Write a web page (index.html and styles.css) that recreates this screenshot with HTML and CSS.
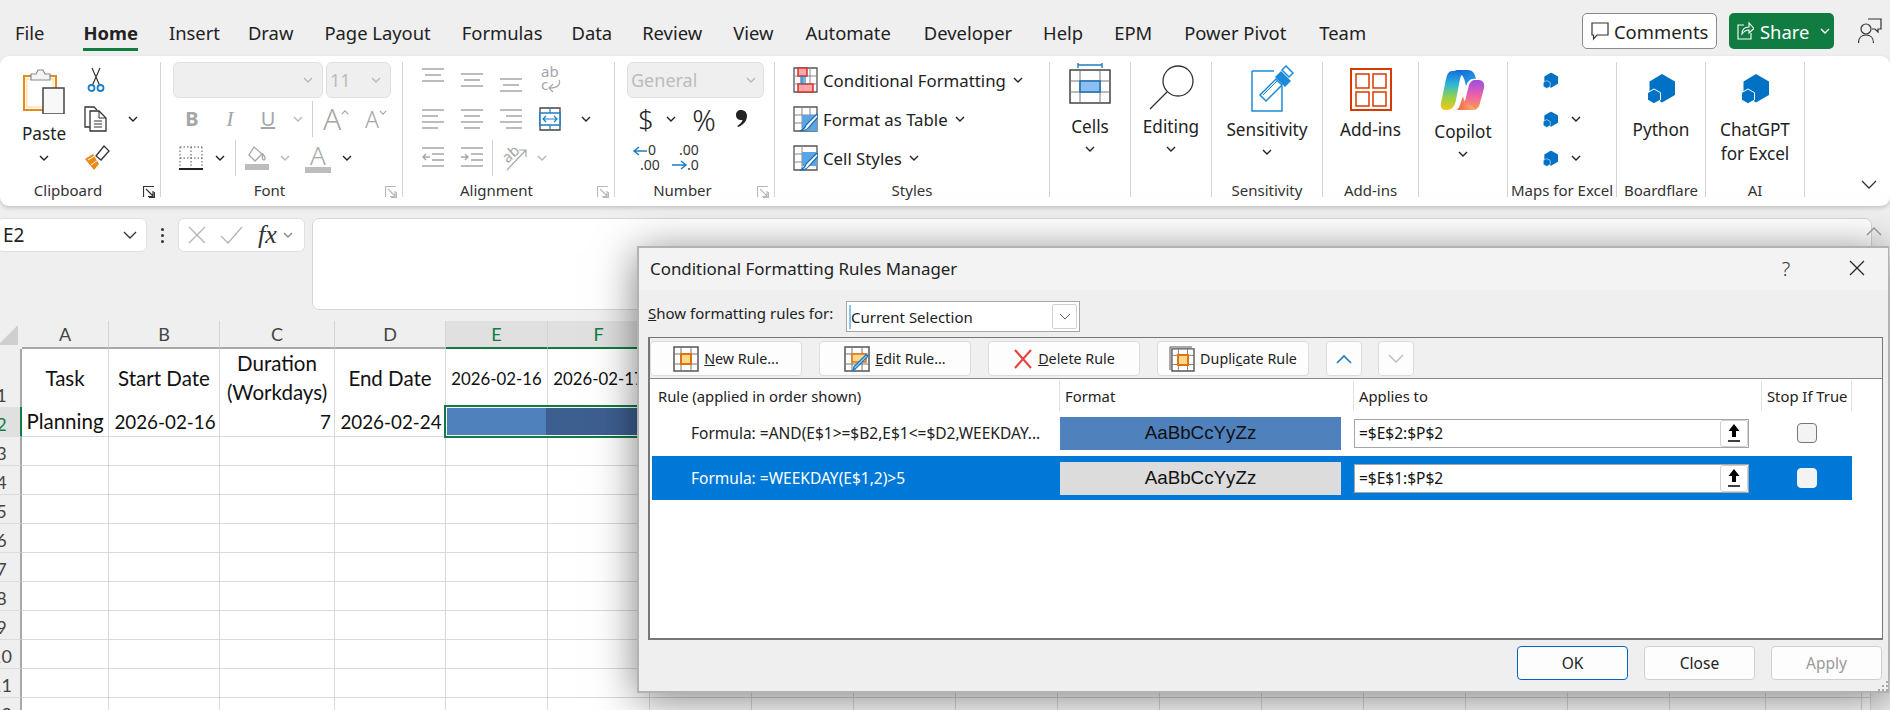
FILE: index.html
```html
<!DOCTYPE html>
<html lang="en">
<head>
<meta charset="utf-8">
<title>Conditional Formatting Rules Manager</title>
<link rel="stylesheet" href="styles.css">
</head>
<body>
<svg class="defs" aria-hidden="true">
  <defs>
    <symbol id="ch" viewBox="0 0 10 6"><path d="M1 1l4 4 4-4" fill="none" stroke="currentColor" stroke-width="1.400"/></symbol>
    <symbol id="hex" viewBox="0 0 28 30"><path d="M15 0l13 7.500V21l-13 7.500L2.500 21V7.500z" fill="#0072c6"/><path d="M7 15l6.500 3.700V26L7 29.700.5 26v-7.300z" fill="#0072c6" stroke="#fff" stroke-width="1"/></symbol>
    <symbol id="launch" viewBox="0 0 12 12"><path d="M.5 11V.5H11M3 3l7 7M10 5v5.500H5M11.500 6v5.500H6" fill="none" stroke="currentColor" stroke-width="1.200"/></symbol>
    <symbol id="up" viewBox="0 0 16 20"><path d="M8 1L2.500 8H6v6h4V8h3.500z" fill="#000"/><path d="M2 18h12" stroke="#000" stroke-width="1.500"/></symbol>
    <symbol id="cellfmt" viewBox="0 0 26 26"><path d="M1 1h24v24H1z" fill="#fff" stroke="#555" stroke-width="1.500"/><path d="M8 1v24M18 1v24M1 8h24M1 18h24" stroke="#777"/></symbol>
    <linearGradient id="cpL" x1="0" y1="0" x2="0" y2="1"><stop offset="0" stop-color="#1a6fe0"/><stop offset=".35" stop-color="#2bb8d8"/><stop offset=".65" stop-color="#8fd14f"/><stop offset="1" stop-color="#f5c518"/></linearGradient>
    <linearGradient id="cpR" x1="0" y1="0" x2="0" y2="1"><stop offset="0" stop-color="#9a4fe0"/><stop offset=".5" stop-color="#ec5fae"/><stop offset="1" stop-color="#fb9a4a"/></linearGradient>
    <linearGradient id="cpT" x1="0" y1="0" x2="1" y2="1"><stop offset="0" stop-color="#0f5fd8"/><stop offset="1" stop-color="#2aa8e8"/></linearGradient>
    <linearGradient id="cpB" x1="0" y1="0" x2="1" y2="0"><stop offset="0" stop-color="#f0553c"/><stop offset="1" stop-color="#ffb27a"/></linearGradient>
  </defs>
</svg>

<header class="tabbar">
  <nav class="tabs">
    <span class="tab t-file">File</span>
    <span class="tab active">Home</span>
    <span class="tab">Insert</span>
    <span class="tab t-draw">Draw</span>
    <span class="tab">Page Layout</span>
    <span class="tab">Formulas</span>
    <span class="tab t-data">Data</span>
    <span class="tab t-review">Review</span>
    <span class="tab">View</span>
    <span class="tab t-auto">Automate</span>
    <span class="tab t-dev">Developer</span>
    <span class="tab">Help</span>
    <span class="tab">EPM</span>
    <span class="tab t-pp">Power Pivot</span>
    <span class="tab t-team">Team</span>
  </nav>
  <div class="actions">
    <button class="btn-comments"><svg width="18" height="20" viewBox="0 0 18 20"><path d="M1 2h16v12H6l-3.500 4v-4H1z" fill="none" stroke="#333" stroke-width="1.200"/></svg>Comments</button>
    <button class="btn-share"><svg width="18" height="20" viewBox="0 0 18 20"><path d="M8 4H2v14h13v-6M6 13c0-5 3-7 7-7V2l5 5.500L13 12V9c-3 0-5 1-7 4z" fill="none" stroke="#fff" stroke-width="1.100"/></svg>Share<svg class="chev" viewBox="0 0 10 6"><use href="#ch"/></svg></button>
    <svg class="person" width="24" height="30" viewBox="0 0 24 30"><circle cx="8" cy="13" r="5" fill="none" stroke="#333" stroke-width="1.200"/><path d="M.5 27c0-5 3-8 7.500-8s7.500 3 7.500 8" fill="none" stroke="#333" stroke-width="1.200"/><path d="M10 3h13v10h-3v3l-3-3h-3" fill="none" stroke="#333" stroke-width="1.200"/></svg>
  </div>
</header>

<section class="ribbon">
  <div class="group g-clip">
    <div class="gbody clip-body">
      <div class="paste">
        <svg width="42" height="46" viewBox="0 0 42 46"><path d="M1 8h32v34H1z" fill="#fdf6e3" stroke="#e58a1f" stroke-width="2"/><path d="M4 11h26v28H4z" fill="#fff" stroke="#f5d9a0"/><path d="M8 6h5l2-4h5l2 4h5v6H8z" fill="#f4f4f4" stroke="#8a8a8a" stroke-width="1.200"/><path d="M20 20h21v26H20z" fill="#f8f8f8" stroke="#444" stroke-width="1.500"/></svg>
        <span class="biglabel">Paste</span>
        <svg class="chev dark" viewBox="0 0 10 6"><use href="#ch"/></svg>
      </div>
      <div class="rows clip-rows">
        <div class="row"><svg width="24" height="26" viewBox="0 0 24 26"><path d="M8 1l7.500 17M16 1L8.500 18" stroke="#333" stroke-width="1.200" fill="none"/><circle cx="7.500" cy="21" r="3" fill="none" stroke="#1c7fc4" stroke-width="1.800"/><circle cx="16.500" cy="21" r="3" fill="none" stroke="#1c7fc4" stroke-width="1.800"/></svg></div>
        <div class="row"><svg width="26" height="26" viewBox="0 0 26 26"><path d="M6 21H1V1h9l3 3" fill="none" stroke="#333" stroke-width="1.300"/><path d="M6 5h9l7 7v13H6z" fill="#fff" stroke="#333" stroke-width="1.300"/><path d="M15 5v7h7M10 15h8M10 18h8M10 21h8" fill="none" stroke="#333"/></svg><svg class="chev dark gap-copy" viewBox="0 0 10 6"><use href="#ch"/></svg></div>
        <div class="row"><svg width="26" height="26" viewBox="0 0 26 26"><path d="M1 14l8-5 6 10-5 6z" fill="#ec8a17"/><path d="M4 15l8-5M7 20l7-5" stroke="#fff"/><path d="M12 11L20 1l5 5-8 9z" fill="#fff" stroke="#333" stroke-width="1.300"/></svg></div>
      </div>
    </div>
    <div class="glabel has-launch">Clipboard<svg class="launch dark" viewBox="0 0 12 12"><use href="#launch"/></svg></div>
  </div>

  <div class="group g-font">
    <div class="gbody rows">
      <div class="row">
        <div class="combo c-name"><svg class="chev pale" viewBox="0 0 10 6"><use href="#ch"/></svg></div>
        <div class="combo c-size"><span>11</span><svg class="chev pale" viewBox="0 0 10 6"><use href="#ch"/></svg></div>
      </div>
      <div class="row fmt">
        <b class="gl w38">B</b><i class="gl w38 it">I</i><u class="gl w38">U</u><svg class="chev pale w-chev" viewBox="0 0 10 6"><use href="#ch"/></svg>
        <span class="vsep"></span>
        <span class="bigA">A<svg viewBox="0 0 10 6"><path d="M1 5l4-4 4 4" fill="none" stroke="#a6a6a6" stroke-width="1.400"/></svg></span>
        <span class="bigA smallA">A<svg viewBox="0 0 10 6"><path d="M1 1l4 4 4-4" fill="none" stroke="#a6a6a6" stroke-width="1.400"/></svg></span>
      </div>
      <div class="row fmt3">
        <svg width="24" height="24" viewBox="0 0 24 24"><path d="M1 1h22M1 1v21M23 1v21M12 1v21M1 12h22" fill="none" stroke="#555" stroke-dasharray="1.500 2"/><path d="M0 23h24" stroke="#222" stroke-width="2"/></svg>
        <svg class="chev dark c1" viewBox="0 0 10 6"><use href="#ch"/></svg>
        <span class="vsep s1"></span>
        <svg width="24" height="26" viewBox="0 0 24 26"><path d="M9 2l-5 8 6 6 7-7zM18 9c2 3 3 5 1 6-2 0-2-3-1-6z" fill="#fff" stroke="#a6a6a6" stroke-width="1.300"/><path d="M0 19h24v6H0z" fill="#bdbdbd"/></svg>
        <svg class="chev pale c2" viewBox="0 0 10 6"><use href="#ch"/></svg>
        <span class="acol">A</span>
        <svg class="chev dark c3" viewBox="0 0 10 6"><use href="#ch"/></svg>
      </div>
    </div>
    <div class="glabel has-launch">Font<svg class="launch" viewBox="0 0 12 12"><use href="#launch"/></svg></div>
  </div>

  <div class="group g-align">
    <div class="gbody rows">
      <div class="row al">
        <svg width="22" height="36" viewBox="0 0 22 36"><path d="M0 7h22M3 13h16M0 19h22" stroke="#a6a6a6" stroke-width="1.400"/></svg>
        <svg width="22" height="36" viewBox="0 0 22 36"><path d="M0 12h22M3 18h16M0 24h22" stroke="#a6a6a6" stroke-width="1.400"/></svg>
        <svg width="22" height="36" viewBox="0 0 22 36"><path d="M0 17h22M3 23h16M0 29h22" stroke="#a6a6a6" stroke-width="1.400"/></svg>
        <svg class="vis" width="22" height="36" viewBox="0 0 22 36"><text x="2" y="15" class="svgt">ab</text><text x="2" y="28" class="svgt">c</text><path d="M20 18c2 4-1 8-9 8m3-4l-4 4 4 4" fill="none" stroke="#a6a6a6" stroke-width="1.200"/></svg>
      </div>
      <div class="row al">
        <svg width="22" height="36" viewBox="0 0 22 36"><path d="M0 9h22M0 15h16M0 21h22M0 27h16" stroke="#a6a6a6" stroke-width="1.400"/></svg>
        <svg width="22" height="36" viewBox="0 0 22 36"><path d="M0 9h22M3 15h16M0 21h22M3 27h16" stroke="#a6a6a6" stroke-width="1.400"/></svg>
        <svg width="22" height="36" viewBox="0 0 22 36"><path d="M0 9h22M6 15h16M0 21h22M6 27h16" stroke="#a6a6a6" stroke-width="1.400"/></svg>
        <svg width="22" height="36" viewBox="0 0 22 36"><path d="M1 7h20v22H1z" fill="#fff" stroke="#444" stroke-width="1.300"/><path d="M1 12h20v12H1z" fill="#fff" stroke="#1c7fc4" stroke-width="1.600"/><path d="M4 18h14M7 15l-3 3 3 3M15 15l3 3-3 3M11 7v5M11 24v5" fill="none" stroke="#1c7fc4" stroke-width="1.200"/></svg>
        <svg class="chev dark c-merge" viewBox="0 0 10 6"><use href="#ch"/></svg>
      </div>
      <div class="row al al3">
        <svg width="22" height="36" viewBox="0 0 22 36"><path d="M0 8h22M10 14h12M10 20h12M0 26h22M8 17H1m3-3l-3 3 3 3" fill="none" stroke="#a6a6a6" stroke-width="1.400"/></svg>
        <svg width="22" height="36" viewBox="0 0 22 36"><path d="M0 8h22M10 14h12M10 20h12M0 26h22M0 17h7m-3-3l3 3-3 3" fill="none" stroke="#a6a6a6" stroke-width="1.400"/></svg>
        <span class="vsep"></span>
        <svg class="vis" width="26" height="36" viewBox="0 0 26 36"><text x="1" y="20" class="svgt" transform="rotate(-42 8 16)">ab</text><path d="M5 30L24 10m-7 0h7v7" fill="none" stroke="#a6a6a6" stroke-width="1.200"/></svg>
        <svg class="chev pale" viewBox="0 0 10 6"><use href="#ch"/></svg>
      </div>
    </div>
    <div class="glabel has-launch">Alignment<svg class="launch" viewBox="0 0 12 12"><use href="#launch"/></svg></div>
  </div>

  <div class="group g-num">
    <div class="gbody rows">
      <div class="row"><div class="combo c-gen"><span>General</span><svg class="chev pale" viewBox="0 0 10 6"><use href="#ch"/></svg></div></div>
      <div class="row numr">
        <span class="dollar">$</span>
        <svg class="chev dark" viewBox="0 0 10 6"><use href="#ch"/></svg>
        <span class="pct">%</span>
        <svg width="14" height="24" viewBox="0 0 14 24"><path d="M7 3c3 0 6 2 6 6 0 5-4 9-9 11l-.8-1c3-2 5-4 5.300-6C6 13.500 2 12.500 2 8c0-3 2-5 5-5z" fill="#222"/></svg>
      </div>
      <div class="row decr">
        <svg class="vis" width="26" height="32" viewBox="0 0 26 32"><text x="15" y="13" class="svgd">0</text><text x="7" y="28" class="svgd">.00</text><path d="M14 9H1m5-4L1 9l5 4" fill="none" stroke="#1c7fc4" stroke-width="1.500"/></svg>
        <svg class="vis" width="26" height="32" viewBox="0 0 26 32"><text x="7" y="13" class="svgd">.00</text><text x="15" y="28" class="svgd">.0</text><path d="M0 23h14m-5-4l5 4-5 4" fill="none" stroke="#1c7fc4" stroke-width="1.500"/></svg>
      </div>
    </div>
    <div class="glabel has-launch">Number<svg class="launch" viewBox="0 0 12 12"><use href="#launch"/></svg></div>
  </div>

  <div class="group g-styles">
    <div class="gbody rows">
      <div class="row st">
        <svg width="25" height="26" viewBox="0 0 25 26"><path d="M1 1h23v24H1z" fill="#fff" stroke="#555" stroke-width="1.300"/><path d="M9 1v24M17 1v24M1 9h23M1 17h23" stroke="#888"/><path d="M5 1h9v8H5zM5 17h15v8H5z" fill="#f7a8a8" stroke="#d83030" stroke-width="1.500"/><path d="M7 9h6v8H7z" fill="#1c7fc4" opacity=".6"/></svg>
        <span>Conditional Formatting</span><svg class="chev dark" viewBox="0 0 10 6"><use href="#ch"/></svg>
      </div>
      <div class="row st">
        <svg width="25" height="26" viewBox="0 0 25 26"><path d="M1 1h23v24H1z" fill="#fff" stroke="#555" stroke-width="1.300"/><path d="M9 1v24M17 1v24M1 9h23M1 17h23" stroke="#888"/><path d="M9 9h15v16H9z" fill="#5aa5e6"/><path d="M24 8L13 19c-1 4-4 5-6 6 3 0 7-1 9-4L25 11z" fill="#fff" stroke="#1c6fb0" stroke-width="1.200"/></svg>
        <span>Format as Table</span><svg class="chev dark" viewBox="0 0 10 6"><use href="#ch"/></svg>
      </div>
      <div class="row st">
        <svg width="25" height="26" viewBox="0 0 25 26"><path d="M1 1h23v24H1z" fill="#fff" stroke="#555" stroke-width="1.300"/><path d="M9 1v24M1 9h23M1 17h23" stroke="#888"/><path d="M9 7h15v14H9z" fill="#5aa5e6"/><path d="M24 8L13 19c-1 4-4 5-6 6 3 0 7-1 9-4L25 11z" fill="#fff" stroke="#1c6fb0" stroke-width="1.200"/></svg>
        <span>Cell Styles</span><svg class="chev dark" viewBox="0 0 10 6"><use href="#ch"/></svg>
      </div>
    </div>
    <div class="glabel">Styles</div>
  </div>

  <div class="group g-cells">
    <div class="gbody big">
      <svg width="42" height="53" viewBox="0 0 42 53"><path d="M9 1v5M33 1v5M9 3h24" stroke="#1c7fc4" stroke-width="1.400" fill="none"/><path d="M1 8h40v33H1z" fill="#fff" stroke="#444" stroke-width="1.500"/><path d="M1 19h40M1 30h40M11 8v33M31 8v33" stroke="#777"/><path d="M11 19h20v11H11z" fill="#8bbff0" stroke="#1c6fb0" stroke-width="1.500"/></svg>
      <span class="biglabel">Cells</span>
      <svg class="chev dark" viewBox="0 0 10 6"><use href="#ch"/></svg>
    </div>
    <div class="glabel"></div>
  </div>

  <div class="group g-edit">
    <div class="gbody big">
      <svg width="46" height="53" viewBox="0 0 46 53"><circle cx="30" cy="19" r="15" fill="none" stroke="#333" stroke-width="1.300"/><path d="M19 30L2 47" stroke="#333" stroke-width="1.300"/></svg>
      <span class="biglabel">Editing</span>
      <svg class="chev dark" viewBox="0 0 10 6"><use href="#ch"/></svg>
    </div>
    <div class="glabel"></div>
  </div>

  <div class="group g-sens">
    <div class="gbody big b56">
      <svg class="sens-ic" width="46" height="56" viewBox="0 0 46 56"><path d="M3 9v40h30V24" fill="#fff" stroke="#1c8ad8" stroke-width="1.500"/><path d="M3 9h22" stroke="#1c8ad8" stroke-width="1.500"/><path d="M11 33L27 17l6 6-16 16z" fill="#fff" stroke="#1c8ad8" stroke-width="1.500"/><path d="M14 33l14-14" stroke="#1c8ad8"/><path d="M26 15l6-6 10 10-6 6z" fill="#1c8ad8"/><path d="M33 8l4-4 7 7-4 4z" fill="#fff" stroke="#1c8ad8" stroke-width="1.500"/></svg>
      <span class="biglabel">Sensitivity</span>
      <svg class="chev dark" viewBox="0 0 10 6"><use href="#ch"/></svg>
    </div>
    <div class="glabel">Sensitivity</div>
  </div>

  <div class="group g-addin">
    <div class="gbody big b56">
      <svg width="42" height="56" viewBox="0 0 42 56"><path d="M1 7h40v41H1z" fill="#fff" stroke="#d83b01" stroke-width="2"/><path d="M6 12h13v14H6zM23 12h13v14H23zM6 30h13v14H6zM23 30h13v14H23z" fill="#fff" stroke="#d83b01" stroke-width="1.500"/></svg>
      <span class="biglabel">Add-ins</span>
    </div>
    <div class="glabel">Add-ins</div>
  </div>

  <div class="group g-copilot">
    <div class="gbody big b58">
      <svg width="46" height="58" viewBox="0 0 46 58"><path d="M12 9h14c-3 1-5 4-6 8l-4 21c-1 6-4 10-9 10H5c-3 0-5-3-4-7l5-24c1-5 3-8 6-8z" fill="url(#cpL)"/><path d="M35 18h4c4 0 6 4 5 8l-4 15c-1 4-3 7-7 7H18c3-1 6-4 7-9l4-16c1-3 3-5 6-5z" fill="url(#cpR)"/><path d="M14 8h14c4 0 7 3 8 9-3-1-6 0-8 3-1 1-1 2-2 4l-1-4c-1-6-5-10-11-12z" fill="url(#cpT)"/><path d="M13 49c4 0 6-3 7-6l3-9c1 5 3 8 7 9 3 1 4 3 6 5H16c-1 1-2 1-3 1z" fill="url(#cpB)"/></svg>
      <span class="biglabel">Copilot</span>
      <svg class="chev dark" viewBox="0 0 10 6"><use href="#ch"/></svg>
    </div>
    <div class="glabel"></div>
  </div>

  <div class="group g-maps">
    <div class="gbody rows">
      <div class="row mp"><svg width="15" height="17" viewBox="0 0 28 30"><use href="#hex"/></svg></div>
      <div class="row mp"><svg width="15" height="17" viewBox="0 0 28 30"><use href="#hex"/></svg><svg class="chev dark" viewBox="0 0 10 6"><use href="#ch"/></svg></div>
      <div class="row mp"><svg width="15" height="17" viewBox="0 0 28 30"><use href="#hex"/></svg><svg class="chev dark" viewBox="0 0 10 6"><use href="#ch"/></svg></div>
    </div>
    <div class="glabel">Maps for Excel</div>
  </div>

  <div class="group g-py">
    <div class="gbody big b56">
      <svg class="hexbig" width="28" height="30" viewBox="0 0 28 30"><use href="#hex"/></svg>
      <span class="biglabel">Python</span>
    </div>
    <div class="glabel">Boardflare</div>
  </div>

  <div class="group g-ai">
    <div class="gbody big b56">
      <svg class="hexbig" width="28" height="30" viewBox="0 0 28 30"><use href="#hex"/></svg>
      <span class="biglabel">ChatGPT<br>for Excel</span>
    </div>
    <div class="glabel">AI</div>
  </div>

  <svg class="collapse" viewBox="0 0 16 10"><path d="M1 1l7 7 7-7" fill="none" stroke="#333" stroke-width="1.300"/></svg>
</section>

<section class="fbar">
  <div class="namebox"><span>E2</span><svg viewBox="0 0 14 8"><path d="M1 1l6 6 6-6" fill="none" stroke="#333" stroke-width="1.300"/></svg></div>
  <div class="dots"><i></i><i></i><i></i></div>
  <div class="fxbox">
    <svg width="20" height="20" viewBox="0 0 20 20"><path d="M2 2l16 16M18 2L2 18" stroke="#b5b5b5" stroke-width="1.300"/></svg>
    <svg width="24" height="20" viewBox="0 0 24 20"><path d="M2 11l7 7L23 2" fill="none" stroke="#b5b5b5" stroke-width="1.300"/></svg>
    <span class="fx">fx</span>
    <svg class="chev fxc" viewBox="0 0 10 6"><use href="#ch"/></svg>
  </div>
  <div class="finput"></div>
  <svg class="fcollapse" viewBox="0 0 16 10"><path d="M1 9l7-7 7 7" fill="none" stroke="#9a9a9a" stroke-width="1.300"/></svg>
</section>

<section class="sheet">
  <div class="grow ghead">
    <div class="rh corner"><span></span></div>
    <div class="ch">A</div><div class="ch">B</div><div class="ch">C</div><div class="ch">D</div>
    <div class="ch sel">E</div><div class="ch sel">F</div><div class="ch sel">G</div><div class="ch sel">H</div><div class="ch sel">I</div><div class="ch sel">J</div><div class="ch sel">K</div><div class="ch sel">L</div><div class="ch sel">M</div><div class="ch sel">N</div><div class="ch sel">O</div><div class="ch sel">P</div><div class="ch">Q</div><div class="ch">R</div>
  </div>
  <div class="grow r1">
    <div class="rh">1</div>
    <div class="c ctr">Task</div><div class="c ctr">Start Date</div><div class="c ctr">Duration<br>(Workdays)</div><div class="c ctr">End Date</div>
    <div class="c ctr date">2026-02-16</div><div class="c ctr date">2026-02-17</div><div class="c"></div>
  </div>
  <div class="grow r2">
    <div class="rh rsel">2</div>
    <div class="c ctr">Planning</div><div class="c ctr num">2026-02-16</div><div class="c rgt num">7</div><div class="c ctr num">2026-02-24</div>
    <div class="c on"><div class="selbox"><span class="fill1"></span><span class="fill2"></span></div></div><div class="c"></div><div class="c"></div>
  </div>
  <div class="grow"><div class="rh">3</div><div class="c"></div><div class="c"></div><div class="c"></div><div class="c"></div><div class="c"></div><div class="c"></div><div class="c"></div></div>
  <div class="grow"><div class="rh">4</div><div class="c"></div><div class="c"></div><div class="c"></div><div class="c"></div><div class="c"></div><div class="c"></div><div class="c"></div></div>
  <div class="grow"><div class="rh">5</div><div class="c"></div><div class="c"></div><div class="c"></div><div class="c"></div><div class="c"></div><div class="c"></div><div class="c"></div></div>
  <div class="grow"><div class="rh">6</div><div class="c"></div><div class="c"></div><div class="c"></div><div class="c"></div><div class="c"></div><div class="c"></div><div class="c"></div></div>
  <div class="grow"><div class="rh">7</div><div class="c"></div><div class="c"></div><div class="c"></div><div class="c"></div><div class="c"></div><div class="c"></div><div class="c"></div></div>
  <div class="grow"><div class="rh">8</div><div class="c"></div><div class="c"></div><div class="c"></div><div class="c"></div><div class="c"></div><div class="c"></div><div class="c"></div></div>
  <div class="grow"><div class="rh">9</div><div class="c"></div><div class="c"></div><div class="c"></div><div class="c"></div><div class="c"></div><div class="c"></div><div class="c"></div></div>
  <div class="grow"><div class="rh">10</div><div class="c"></div><div class="c"></div><div class="c"></div><div class="c"></div><div class="c"></div><div class="c"></div><div class="c"></div></div>
  <div class="grow"><div class="rh">11</div><div class="c"></div><div class="c"></div><div class="c"></div><div class="c"></div><div class="c"></div><div class="c"></div><div class="c"></div><div class="c"></div><div class="c"></div><div class="c"></div><div class="c"></div><div class="c"></div><div class="c"></div><div class="c"></div><div class="c"></div><div class="c"></div><div class="c"></div><div class="c"></div><div class="c"></div></div>
  <div class="grow"><div class="rh">12</div><div class="c"></div><div class="c"></div><div class="c"></div><div class="c"></div><div class="c"></div><div class="c"></div><div class="c"></div><div class="c"></div><div class="c"></div><div class="c"></div><div class="c"></div><div class="c"></div><div class="c"></div><div class="c"></div><div class="c"></div><div class="c"></div><div class="c"></div><div class="c"></div><div class="c"></div></div>
</section>

<div class="dialog" role="dialog">
  <div class="dtitle">
    <span class="dt-text">Conditional Formatting Rules Manager</span>
    <span class="dt-help">?</span>
    <svg class="dt-x" width="16" height="16" viewBox="0 0 16 16"><path d="M1 1l14 14M15 1L1 15" stroke="#222" stroke-width="1.200"/></svg>
  </div>
  <div class="dshow">
    <span class="dshow-l"><u>S</u>how formatting rules for:</span>
    <div class="dcombo"><span class="caret"></span><span class="dcombo-t">Current Selection</span><span class="dcombo-b"><svg width="12" height="7" viewBox="0 0 12 7"><path d="M1 1l5 5 5-5" fill="none" stroke="#666"/></svg></span></div>
  </div>
  <div class="panel">
    <div class="ptools">
      <button class="tbtn"><svg width="26" height="26" viewBox="0 0 26 26"><use href="#cellfmt"/><path d="M8 8h10v10H8z" fill="#fbd98c" stroke="#e0730c" stroke-width="2"/></svg><span><u>N</u>ew Rule...</span></button>
      <button class="tbtn"><svg width="26" height="26" viewBox="0 0 26 26"><use href="#cellfmt"/><path d="M8 8h14v8H8z" fill="#fbd98c" stroke="#e0730c" stroke-width="1.500"/><path d="M24 10L12 22l-3 3 1-4L22 9z" fill="#fff" stroke="#1c7fc4" stroke-width="1.500"/></svg><span><u>E</u>dit Rule...</span></button>
      <button class="tbtn"><svg width="20" height="22" viewBox="0 0 20 22"><path d="M2 2l16 18M18 2L2 20" stroke="#e8403a" stroke-width="2"/></svg><span><u>D</u>elete Rule</span></button>
      <button class="tbtn"><svg width="26" height="26" viewBox="0 0 26 26"><path d="M1 24V1h22" fill="none" stroke="#555"/><g transform="translate(2 2) scale(.92)"><use href="#cellfmt"/></g><path d="M9 9h10v10H9z" fill="#fbd98c" stroke="#e0730c" stroke-width="2"/></svg><span>Dupli<u>c</u>ate Rule</span></button>
      <button class="tbtn ar"><svg width="16" height="10" viewBox="0 0 16 10"><path d="M1 9l7-7 7 7" fill="none" stroke="#1c7fc4" stroke-width="1.600"/></svg></button>
      <button class="tbtn ar a2"><svg width="16" height="10" viewBox="0 0 16 10"><path d="M1 1l7 7 7-7" fill="none" stroke="#bbb" stroke-width="1.400"/></svg></button>
    </div>
    <div class="rhead">
      <div>Rule (applied in order shown)</div><div>Format</div><div>Applies to</div><div>Stop If True</div>
    </div>
    <div class="rule r-a">
      <div class="rtext">Formula: =AND(E$1&gt;=$B2,E$1&lt;=$D2,WEEKDAY...</div>
      <div class="rfmt blue">AaBbCcYyZz</div>
      <div class="rinp"><span>=$E$2:$P$2</span><button class="rup"><svg width="16" height="20" viewBox="0 0 16 20"><use href="#up"/></svg></button></div>
      <div class="rchk"><span class="chk"></span></div>
    </div>
    <div class="rule r-b">
      <div class="rtext">Formula: =WEEKDAY(E$1,2)&gt;5</div>
      <div class="rfmt grey">AaBbCcYyZz</div>
      <div class="rinp"><span>=$E$1:$P$2</span><button class="rup"><svg width="16" height="20" viewBox="0 0 16 20"><use href="#up"/></svg></button></div>
      <div class="rchk"><span class="chk"></span></div>
    </div>
  </div>
  <div class="dfoot">
    <button class="fbtn ok">OK</button>
    <button class="fbtn">Close</button>
    <button class="fbtn off">Apply</button>
  </div>
  <svg class="grip" width="10" height="10" viewBox="0 0 10 10"><path d="M8 0h2v2H8zM4 4h2v2H4zM8 4h2v2H8zM0 8h2v2H0zM4 8h2v2H4zM8 8h2v2H8z" fill="#a8a8a8"/></svg>
</div>
</body>
</html>
```

FILE: styles.css
```css
* { box-sizing: border-box; }
html, body { margin: 0; padding: 0; }
body {
  position: relative;
  width: 1890px; height: 710px; overflow: hidden;
  background: #efefef; color: #222;
  font-family: "Noto Sans", "Open Sans", sans-serif;
  font-size: 16px;
}
button { font: inherit; color: inherit; padding: 0; cursor: default; }
.defs { position: absolute; width: 0; height: 0; }
svg { display: block; flex: none; }
svg.vis { overflow: visible; }
.chev { width: 10px; height: 6px; color: #222; }
.chev.pale { color: #b8b8b8; }

/* tabs */
.tabbar { display: flex; height: 56px; }
.tabs { display: flex; gap: 31px; padding: 18px 0 0 15px; flex: 1; font-size: 18.400px; line-height: 30px; }
.tab { height: 33px; }
.tab.active { font-weight: 700; border-bottom: 3px solid #107c41; }
.t-file { margin-right: 8px; }
.t-draw { margin-left: -3px; }
.t-data { margin-left: -2px; }
.t-review { margin-left: -1px; }
.t-auto { margin-left: 1px; }
.t-dev { margin-left: 2px; }
.t-pp { margin-left: 1px; }
.t-team { margin-left: 2px; }
.actions { display: flex; align-items: flex-start; padding: 13px 8px 0 0; gap: 12px; }
.btn-comments, .btn-share { display: flex; align-items: center; height: 36px; border-radius: 5px; font-size: 18.400px; }
.btn-comments { width: 135px; background: #fff; border: 1px solid #8a8a8a; padding-left: 8px; gap: 5px; }
.btn-share { width: 105px; background: #107c41; color: #fff; border: 0; padding-left: 7px; gap: 6px; }
.btn-share .chev { color: #fff; margin-left: 5px; }
.person { margin: 3px 0 0 12px; }

/* ribbon */
.ribbon {
  position: relative; display: flex; height: 150px; padding-top: 6px;
  background: #fff; border-radius: 9px;
  box-shadow: 0 2px 4px rgba(0,0,0,.18);
}
.group { display: flex; flex-direction: column; height: 135px; border-right: 1px solid #d4d4d4; }
.gbody { flex: 1; }
.glabel { height: 14px; line-height: 14px; font-size: 15px; text-align: center; position: relative; white-space: nowrap; color: #333; }
.has-launch { padding-right: 24px; }
.launch { position: absolute; right: 5px; top: 3px; width: 12px; height: 12px; color: #b8b8b8; }
.launch.dark { color: #333; }
.rows { display: grid; grid-template-rows: repeat(3, 36px); row-gap: 3px; align-content: start; }
.row { display: flex; align-items: center; }
.biglabel { display: block; text-align: center; font-size: 17.200px; line-height: 24px; color: #222; }
.big { display: flex; flex-direction: column; align-items: center; }
.big .chev { margin-top: 7px; }
.hexbig { margin-top: 12px; margin-bottom: 14px; }
.sens-ic { margin-left: 9px; }

.g-clip { width: 161px; }
.clip-body { display: flex; }
.paste { display: flex; flex-direction: column; align-items: center; width: 84px; padding: 6px 0 0 4px; }
.paste .biglabel { margin-top: 8px; }
.paste .chev { margin-top: 9px; }
.gap-copy { margin-left: 18px; }

.g-font { width: 242px; }
.g-font .rows { padding-left: 12px; }
.combo { display: flex; align-items: center; justify-content: flex-end; height: 36px; background: #efefef; border: 1px solid #e0e0e0; border-radius: 6px; padding-right: 9px; color: #bcbcbc; font-size: 18px; }
.combo span { flex: 1; padding-left: 3px; }
.c-name { width: 150px; }
.c-size { width: 65px; margin-left: 3px; }
.gl { display: block; text-align: center; color: #a6a6a6; font-size: 20px; line-height: 36px; }
.w38 { width: 38px; }
.it { font-family: "Liberation Serif", serif; font-size: 22px; font-weight: 400; }
.w-chev { margin-left: 6px; }
.vsep { width: 1px; height: 36px; background: #d0d0d0; }
.fmt .vsep { margin: 0 0 0 9px; }
.bigA { display: flex; align-items: flex-start; color: #a6a6a6; font-size: 30px; font-weight: 300; line-height: 36px; width: 40px; margin-left: 10px; }
.bigA svg { width: 8px; height: 5px; margin-top: 9px; }
.smallA { font-size: 23px; margin-left: 2px; }
.fmt3 { padding-left: 6px; }
.fmt3 .c1 { margin-left: 12px; }
.fmt3 .s1 { margin: 0 9px 0 10px; }
.fmt3 .c2 { margin-left: 11px; }
.acol { width: 26px; height: 30px; margin-left: 15px; border-bottom: 6px solid #bdbdbd; color: #a6a6a6; font-size: 26px; font-weight: 300; line-height: 24px; text-align: center; }
.fmt3 .c3 { margin-left: 11px; }

.g-align { width: 212px; }
.g-align .rows { padding-left: 19px; }
.al { gap: 17px; }
.al3 { gap: 0; }
.al3 svg:nth-child(2) { margin-left: 17px; }
.al3 .vsep { margin: 0 9px; }
.al3 .chev { margin-left: 9px; }
.c-merge { margin-left: 3px; }
.svgt { font-size: 15px; fill: #a6a6a6; font-family: "Noto Sans", sans-serif; }
.svgd { font-size: 14px; fill: #333; font-family: "Noto Sans", sans-serif; }

.g-num { width: 160px; }
.g-num .rows { padding-left: 12px; }
.c-gen { width: 137px; padding-right: 7px; }
.numr { padding-left: 7px; }
.dollar { font-size: 27px; font-weight: 300; width: 24px; text-align: center; }
.numr .chev { margin: 0 0 0 8px; }
.pct { font-size: 29px; font-weight: 300; width: 38px; text-align: center; margin-left: 9px; }
.numr svg:last-child { margin-left: 11px; }
.decr { gap: 13px; padding-left: 6px; }

.g-styles { width: 275px; }
.g-styles .rows { padding-left: 18px; }
.st { gap: 5px; font-size: 16.800px; color: #222; white-space: nowrap; }
.st .chev { margin-left: 2px; }

.g-cells { width: 81px; }
.g-edit { width: 81px; }
.g-sens { width: 111px; }
.g-addin { width: 96px; }
.g-copilot { width: 89px; }
.g-maps { width: 109px; }
.g-py { width: 89px; }
.g-ai { width: 99px; }
.mp { padding-left: 35px; gap: 13px; }
.collapse { position: absolute; right: 13px; bottom: 16px; width: 16px; height: 10px; }

/* formula bar */
.fbar { position: relative; display: flex; align-items: flex-start; height: 115px; padding-top: 12px; }
.namebox { display: flex; align-items: center; justify-content: space-between; width: 150px; height: 34px; margin-left: -3px; padding: 0 9px 0 5px; background: #fff; border: 1px solid #e0e0e0; border-radius: 6px; font-size: 19px; }
.namebox svg { width: 14px; height: 8px; }
.dots { display: flex; flex-direction: column; gap: 3px; width: 31px; height: 34px; align-items: center; justify-content: center; }
.dots i { width: 3px; height: 3px; background: #333; border-radius: 50%; }
.fxbox { display: flex; align-items: center; width: 127px; height: 34px; background: #fff; border: 1px solid #e0e0e0; border-radius: 6px; padding-left: 8px; gap: 12px; }
.fx { font-family: "Liberation Serif", serif; font-style: italic; font-size: 26px; margin-left: 3px; color: #333; line-height: 28px; }
.fxc { color: #888; margin-left: -6px; }
.finput { width: 1560px; height: 92px; margin-left: 7px; background: #fff; border: 1px solid #d6d6d6; border-radius: 7px; }
.fcollapse { position: absolute; right: 8px; top: 20px; width: 16px; height: 10px; }

/* sheet */
.sheet { margin-left: -17px; font-family: Lato, "Noto Sans", sans-serif; }
.grow { display: grid; height: 29px; grid-template-columns: 39px 87px 111px 115px 111px repeat(12, 102px) 96px 96px 9px; }
.ghead { height: 28px; }
.r1 { height: 58px; }
.r2 { height: 30px; }
.rh { display: flex; align-items: center; justify-content: center; background: #efefef; color: #444; border-right: 2px solid #a8a8a8; font-size: 18px; border-bottom: 1px solid #dcdcdc; padding-top: 4px; }
.corner { border-right: 0; border-bottom: 0; justify-content: flex-end; padding: 0 4px 0 0; }
.corner span { width: 0; height: 0; border-style: solid; border-width: 0 0 20px 20px; border-color: transparent transparent #cfcfcf transparent; }
.rsel { background: #e0e0e0; color: #107c41; border-right-color: #107c41; }
.r1 .rh { align-items: flex-end; padding: 0 0 1px; }
.ch { display: flex; align-items: center; justify-content: center; background: #efefef; color: #444; font-size: 18px; border-right: 1px solid #d4d4d4; border-bottom: 2px solid #a8a8a8; }
.ch.sel { background: #e0e0e0; color: #107c41; border-bottom-color: #107c41; }
.c { display: flex; align-items: center; background: #fff; color: #111; font-size: 20.500px; line-height: 29px; border-right: 1px solid #d9d9d9; border-bottom: 1px solid #d9d9d9; white-space: nowrap; }
.ctr { justify-content: center; text-align: center; }
.rgt { justify-content: flex-end; padding-right: 3px; }
.num { font-size: 18.800px; }
.ctr.num { padding-left: 2px; }
.date { font-size: 16.800px; }
.on { position: relative; overflow: visible; }
.selbox { position: absolute; left: -2px; top: -2px; width: 230px; height: 33px; display: flex; border: 2px solid #107c41; padding: 1px; background: #fff; z-index: 1; }
.fill1 { width: 99px; background: #4f81bd; }
.fill2 { flex: 1; background: #3d5f90; }

/* dialog */
.dialog {
  position: absolute; left: 637px; top: 246px; width: 1252px; height: 447px;
  display: flex; flex-direction: column; z-index: 5;
  background: #efefef; border: 2px solid #b2b2b2; border-right-width: 1px;
  box-shadow: 0 6px 40px rgba(0,0,0,.5);
}
.dtitle { display: flex; align-items: center; height: 42px; padding: 0 0 2px 11px; background: #f3f3f3; font-size: 16.900px; }
.dt-text { flex: 1; }
.dt-help { width: 20px; text-align: center; margin-right: 53px; color: #333; font-size: 20px; font-weight: 300; }
.dt-x { margin-right: 23px; }
.dshow { display: flex; align-items: flex-start; height: 47px; padding: 11px 0 0 9px; }
.dshow-l { width: 198px; font-size: 15px; line-height: 24px; white-space: nowrap; }
.dcombo { display: flex; align-items: center; width: 234px; height: 31px; background: #fff; border: 1px solid #a6a6a6; padding-left: 2px; font-size: 15px; }
.caret { width: 2px; height: 24px; background: #8cc4f0; }
.dcombo-t { flex: 1; padding-left: 0; }
.dcombo-b { display: flex; align-items: center; justify-content: center; width: 25px; height: 25px; margin-right: 2px; background: #fff; border: 1px solid #d0d0d0; border-radius: 2px; }
.panel { margin-left: 9px; width: 1235px; height: 303px; background: #fff; border: 1px solid #777; border-bottom-width: 2px; border-left-width: 2px; border-right-width: 1px; }
.ptools { display: flex; gap: 17px; height: 41px; padding: 3px 0 0 0; background: #f0f0f0; border-bottom: 1px solid #8a8a8a; }
.tbtn { display: flex; align-items: center; justify-content: center; gap: 5px; width: 152px; height: 35px; background: #fdfdfd; border: 1px solid #dcdcdc; border-radius: 4px; font-size: 14.300px; }
.tbtn.ar { width: 36px; }
.tbtn.a2 { margin-left: -1px; }
.rhead { display: grid; grid-template-columns: 410px 294px 408px 90px; height: 32px; font-size: 14.800px; white-space: nowrap; }
.rhead > div { display: flex; align-items: center; padding: 0 0 0 8px; margin-top: 2px; border-right: 1px solid #e2e2e2; }
.rhead > div + div { padding-left: 5px; }
.rule { display: grid; grid-template-columns: 408px 294px 408px 90px; align-items: center; margin-left: 2px; width: 1200px; font-size: 15.500px; }
.r-a { height: 38px; margin-top: 3px; }
.r-b { height: 44px; margin-top: 4px; background: #0078d7; }
.r-b .rtext { color: #fff; }
.rtext { padding-left: 39px; white-space: nowrap; }
.rfmt { display: flex; align-items: center; justify-content: center; width: 281px; height: 33px; font-family: "Liberation Sans", sans-serif; font-size: 18.800px; color: #111; }
.blue { background: #4f81bd; }
.grey { background: #dcdcdc; }
.rinp { display: flex; align-items: center; justify-content: space-between; width: 395px; height: 29px; background: #fff; border: 1px solid #a6a6a6; padding-left: 4px; color: #111; }
.rup { display: flex; align-items: center; justify-content: center; width: 28px; height: 27px; background: #fff; border: 1px solid #d0d0d0; border-radius: 3px; }
.rchk { display: flex; justify-content: center; }
.chk { width: 20px; height: 20px; background: #f3f3f3; border: 1px solid #777; border-radius: 4px; }
.r-b .chk { border-color: #f3f3f3; }
.dfoot { display: flex; justify-content: flex-end; gap: 16px; padding: 6px 6px 0 0; }
.fbtn { width: 111px; height: 34px; background: #fdfdfd; border: 1px solid #d0d0d0; border-radius: 4px; font-size: 15.500px; }
.fbtn.ok { border-color: #0067c0; }
.fbtn.off { color: #9a9a9a; }
.grip { position: absolute; right: 0; bottom: 0; }
```
